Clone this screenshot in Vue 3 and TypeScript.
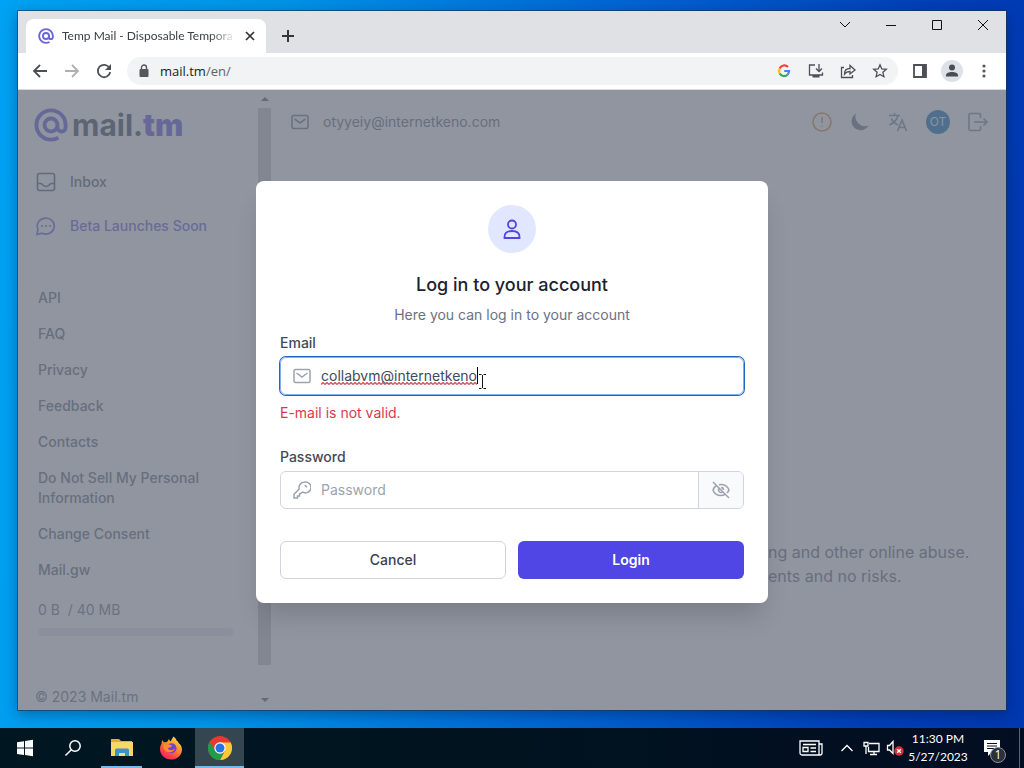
<script setup lang="ts">
import { ref } from 'vue'

const email = ref('collabvm@internetkeno')
const password = ref('')
const showPassword = ref(false)
const links: string[] = [
  'API',
  'FAQ',
  'Privacy',
  'Feedback',
  'Contacts',
  'Do Not Sell My Personal Information',
  'Change Consent',
  'Mail.gw',
]
</script>

<template>
  <div class="desktop">
    <div class="window">
      <div class="tabstrip">
        <div class="tab">
          <svg class="favicon" viewBox="1.5 1.5 21 21" aria-hidden="true">
            <path d="M16 12a4 4 0 1 0-8 0 4 4 0 0 0 8 0zm0 0v1.500a2.500 2.500 0 0 0 5 0V12a9 9 0 1 0-9 9c2 0 3.500-.5 4.500-1.200" />
          </svg>
          <span class="tab-title">Temp Mail - Disposable Tempora</span>
          <button class="tab-close" aria-label="Close tab">
            <svg width="10" height="10" viewBox="0 0 10 10"><path d="M1 1l8 8M9 1L1 9" stroke="#333" stroke-width="1.700" /></svg>
          </button>
        </div>
        <button class="new-tab" aria-label="New tab">
          <svg width="14" height="14" viewBox="0 0 14 14"><path d="M7 1v12M1 7h12" stroke="#333639" stroke-width="2" /></svg>
        </button>
        <div class="controls">
          <button aria-label="Search tabs"><svg width="12" height="12" viewBox="0 0 12 12"><path d="M1 3l5 5 5-5" /></svg></button>
          <button aria-label="Minimize"><svg width="12" height="12" viewBox="0 0 12 12"><path d="M1 6.500h10" /></svg></button>
          <button aria-label="Maximize"><svg width="12" height="12" viewBox="0 0 12 12"><path d="M1.500 1.500h9v9h-9z" /></svg></button>
          <button aria-label="Close"><svg width="12" height="12" viewBox="0 0 12 12"><path d="M1 1l10 10M11 1L1 11" /></svg></button>
        </div>
      </div>

      <div class="toolbar">
        <button class="tool" aria-label="Back"><svg viewBox="0 0 16 16"><path d="M15 8H2M8 2L2 8l6 6" /></svg></button>
        <button class="tool faded" aria-label="Forward"><svg viewBox="0 0 16 16"><path d="M1 8h13M8 2l6 6-6 6" /></svg></button>
        <button class="tool" aria-label="Reload">
          <svg viewBox="0 0 16 16"><path d="M13.500 5A6.200 6.200 0 1 0 14.200 9" /><path d="M15 1v6H9z" class="solid" /></svg>
        </button>
        <div class="omnibox">
          <svg class="lock" width="10" height="14" viewBox="0 0 10 14" aria-hidden="true">
            <rect x="0.500" y="5" width="9" height="8" rx="1" fill="#55585c" />
            <path d="M2.500 5V3.500a2.500 2.500 0 0 1 5 0V5" fill="none" stroke="#55585c" stroke-width="1.400" />
          </svg>
          <span class="url">mail.tm<span>/en/</span></span>
          <button class="tool" aria-label="Google Lens">
            <svg class="google" viewBox="0 0 16 16">
              <path d="M12 4A5 5 0 0 0 3.700 5.500" stroke="#ea4335" />
              <path d="M3.700 5.500a5 5 0 0 0 0 5" stroke="#fbbc05" />
              <path d="M3.700 10.500A5 5 0 0 0 11.500 11.700" stroke="#34a853" />
              <path d="M11.500 11.700A5 5 0 0 0 13 8H8.200" stroke="#4285f4" />
            </svg>
          </button>
          <button class="tool" aria-label="Install">
            <svg class="thin" viewBox="0 0 16 16"><path d="M7 2H1.500v10H14.500V9.500M11 1v7M8 5.500l3 3 3-3" /><path d="M4.500 12h7v2.500h-7z" class="solid" /></svg>
          </button>
          <button class="tool" aria-label="Share">
            <svg class="thin" viewBox="0 0 16 16"><path d="M4 4.500H1.500v10h11V12M4.500 11c0-4 2-5.500 5.500-5.500V2.500L15 7l-5 4V8.500C7.500 8.500 6 9 4.500 11z" /></svg>
          </button>
          <button class="tool" aria-label="Bookmark">
            <svg class="thin" viewBox="0 0 16 16"><path d="M8 1.800l1.800 4.100 4.500.4-3.400 3 1 4.400L8 11.400l-3.900 2.300 1-4.400-3.400-3 4.500-.4z" /></svg>
          </button>
        </div>
        <button class="tool" aria-label="Side panel">
          <svg viewBox="0 0 16 16"><path d="M2 2h12v12H2z" /><path d="M10 2h4v12h-4z" class="solid" /></svg>
        </button>
        <button class="tool" aria-label="Profile">
          <svg class="profile" viewBox="0 0 22 22"><circle cx="11" cy="11" r="11" fill="#dfe1e8" /><circle cx="11" cy="7.500" r="3" fill="#494c53" /><path d="M5 16.500v-1.300c0-4.200 12-4.200 12 0v1.300z" fill="#494c53" /></svg>
        </button>
        <button class="tool" aria-label="Menu">
          <svg viewBox="0 0 16 16"><g fill="#55585c" stroke="none"><circle cx="8" cy="3" r="1.600" /><circle cx="8" cy="8" r="1.600" /><circle cx="8" cy="13" r="1.600" /></g></svg>
        </button>
      </div>

      <div class="page">
        <aside class="sidebar">
          <div class="side-body">
            <a class="logo" href="#">
              <svg viewBox="1.500 1.500 21 21" aria-hidden="true">
                <path d="M16 12a4 4 0 1 0-8 0 4 4 0 0 0 8 0zm0 0v1.500a2.500 2.500 0 0 0 5 0V12a9 9 0 1 0-9 9c2 0 3.500-.5 4.500-1.200" />
              </svg>
              <span>mail.<b>tm</b></span>
            </a>
            <nav class="main-nav">
              <a href="#">
                <svg viewBox="0 0 20 20"><rect x="1.500" y="1.500" width="17" height="17" rx="2" /><path d="M1.500 11.500H5c1 0 1.500 3 5 3s4-3 5-3h3.500" /></svg>
                Inbox
              </a>
              <a href="#" class="beta">
                <svg viewBox="0 0 20 20"><path d="M1 18.500l.9-5.500A8.500 8 0 1 1 6 17.200z" /><path d="M6 10h.1M10 10h.1M14 10h.1" class="dots" /></svg>
                Beta Launches Soon
              </a>
            </nav>
            <nav class="links">
              <a v-for="link in links" :key="link" href="#">{{ link }}</a>
            </nav>
            <div class="quota">
              <span>0 B&nbsp; / 40 MB</span>
              <div class="quota-bar"></div>
            </div>
            <footer>© 2023 Mail.tm</footer>
          </div>
          <div class="scrollbar">
            <svg width="8" height="4" viewBox="0 0 8 4"><path d="M0 4l4-4 4 4z" /></svg>
            <div class="thumb"></div>
            <svg width="8" height="4" viewBox="0 0 8 4"><path d="M0 0l4 4 4-4z" /></svg>
          </div>
        </aside>

        <main>
          <header>
            <svg class="mail" viewBox="0 0 18 18" aria-hidden="true"><rect x="1" y="2.500" width="16" height="13" rx="1.500" /><path d="M3.500 6L9 10l5.500-4" /></svg>
            <span class="address">otyyeiy@internetkeno.com</span>
            <button aria-label="Status" class="warn"><svg viewBox="0 0 20 20"><circle cx="10" cy="10" r="9" /><path d="M10 5v6M10 13.500v1" /></svg></button>
            <button aria-label="Dark mode" class="moon"><svg viewBox="0 0 20 20"><path d="M6 1.500a9 9 0 1 0 12.500 12A9.500 9.500 0 0 1 6 1.500z" /></svg></button>
            <button aria-label="Language"><svg viewBox="0 0 20 20"><path d="M1 3.500h11M6.500 1v2.500M10 3.500C9 8 5.500 11 1.500 13M3.500 6.500c1 3 3.500 5 6.500 6.500M9.500 19l4.500-11 4.500 11M11 15.500h6" /></svg></button>
            <button aria-label="Account"><span class="avatar">OT</span></button>
            <button aria-label="Log out"><svg viewBox="0 0 20 20"><path d="M12.500 6V3a1.500 1.500 0 0 0-1.500-1.500H2.500A1.500 1.500 0 0 0 1 3v14a1.500 1.500 0 0 0 1.500 1.500H11a1.500 1.500 0 0 0 1.500-1.500v-3M6 10h13M15.500 6.500L19 10l-3.500 3.500" /></svg></button>
          </header>
          <p class="pitch">ng and other online abuse.<br />ents and no risks.</p>
        </main>

        <div class="backdrop">
          <form class="modal" role="dialog" aria-labelledby="login-title" @submit.prevent>
            <div class="badge">
              <svg width="24" height="24" viewBox="0 0 24 24"><circle cx="12" cy="7.500" r="4" /><path d="M4.500 21v-1c0-4 3-6 7.500-6s7.500 2 7.500 6v1z" /></svg>
            </div>
            <h1 id="login-title">Log in to your account</h1>
            <p class="sub">Here you can log in to your account</p>

            <label for="email">Email</label>
            <div class="field focused">
              <svg viewBox="0 0 18 18" aria-hidden="true"><rect x="1" y="2.500" width="16" height="13" rx="1.500" /><path d="M3.500 6L9 10l5.500-4" /></svg>
              <input id="email" v-model="email" type="text" />
              <svg class="squiggle" aria-hidden="true">
                <defs>
                  <pattern id="wave" width="4" height="3" patternUnits="userSpaceOnUse"><path d="M0 2.500L2 .5l2 2" fill="none" stroke="#d65a60" /></pattern>
                </defs>
                <rect width="100%" height="3" fill="url(#wave)" stroke="none" />
              </svg>
              <i class="caret"></i>
              <svg class="ibeam" viewBox="0 0 9 17" aria-hidden="true"><path d="M1 1.500h2.500M5.500 1.500H8M4.500 2v13M1 15.500h2.500M5.500 15.500H8" /></svg>
            </div>
            <p class="error">E-mail is not valid.</p>

            <label for="password">Password</label>
            <div class="field">
              <svg viewBox="0 0 18 18" aria-hidden="true"><path d="M11.500 1A5.500 5.500 0 0 0 6.200 8L1 13.200V17h3.500v-2h2v-2l3.300-1.800A5.500 5.500 0 1 0 11.500 1z" /><path d="M11.500 4.500a2 2 0 0 1 2 2" /></svg>
              <input id="password" v-model="password" :type="showPassword ? 'text' : 'password'" placeholder="Password" />
              <button type="button" class="eye" aria-label="Show password" @click="showPassword = !showPassword">
                <svg viewBox="0 0 18 18"><path d="M1 1l16 16M4.500 4.500C2.500 5.700 1.500 7.500 1 9c1 3 4 5.500 8 5.500 1.500 0 2.700-.3 3.800-.9M7 3.700C12 2.800 16 5.500 17 9c-.4 1.200-1 2.200-2 3M7.300 7.300a2.400 2.400 0 0 0 3.400 3.400M9 6.500a2.500 2.500 0 0 1 2.500 2.500" /></svg>
              </button>
            </div>

            <div class="actions">
              <button type="button" class="cancel">Cancel</button>
              <button type="submit" class="login">Login</button>
            </div>
          </form>
        </div>
      </div>
    </div>

    <div class="taskbar">
      <button class="task" aria-label="Start">
        <svg width="18" height="18" viewBox="0 0 18 18" fill="#fff"><path d="M1 3.200L8 2.200v6.400H1zM9 2l8-1.200v7.800H9zM1 9.500h7v6.400l-7-1zM9 9.500h8v7.700L9 16z" /></svg>
      </button>
      <button class="task search" aria-label="Search">
        <svg width="18" height="18" viewBox="0 0 18 18" fill="none" stroke="#fff" stroke-width="1.500"><circle cx="11" cy="7" r="5.200" /><path d="M7.300 10.700L1.500 16.500" /></svg>
      </button>
      <button class="task open" aria-label="File Explorer">
        <svg width="24" height="22" viewBox="0 0 24 22">
          <path d="M1 2h8l2 2h11v14H1z" fill="#e9a83a" /><path d="M1 5h22v14H1z" fill="#fbd768" />
          <path d="M5 19v-6q0-1.500 1.500-1.500h11q1.500 0 1.500 1.500v6h-4v-3H9v3z" fill="#3e92cc" /><path d="M9 16h6v3H9z" fill="#f6dc85" />
        </svg>
      </button>
      <button class="task" aria-label="Firefox">
        <svg width="24" height="24" viewBox="0 0 24 24">
          <defs>
            <linearGradient id="fox" x1="0.800" y1="0" x2="0.200" y2="1"><stop offset="0" stop-color="#ffe14a" /><stop offset="0.400" stop-color="#ff9428" /><stop offset="0.750" stop-color="#ff4048" /><stop offset="1" stop-color="#e41f74" /></linearGradient>
          </defs>
          <path d="M14.500.5c2 1.500 3 3 3.300 4.600 1-.1 1.600.8 1.700 1.800 1.800 1 3.500 3.600 3.500 6.500C23 19 18 23.500 12 23.500S1 19 1 13.200C1 10.500 2 8.500 2.600 7.500L3 4l2 2.300 3-.3 2-3 1 2.300c1.500 0 2-3 3.500-4.800z" fill="url(#fox)" />
          <circle cx="12.500" cy="12.300" r="5" fill="#7542c9" />
          <path d="M4.500 8.500c2-1.700 4-1.200 5.500 0l3 .7-1.200 2-3 .8c.5 2.500 4.500 3 7 .8-1 4.500-9 5-11-.3z" fill="#ff8b28" />
        </svg>
      </button>
      <button class="task open active" aria-label="Google Chrome">
        <svg width="24" height="24" viewBox="0 0 24 24">
          <circle cx="12" cy="12" r="12" fill="#e33b2e" />
          <path d="M12 6.500h10.700A12 12 0 0 1 12 24l4.800-9.200z" fill="#fcc934" />
          <path d="M1.600 6l5.600 8.800a5.500 5.500 0 0 0 9.600 0L12 24A12 12 0 0 1 1.600 6z" fill="#1e9e4a" />
          <circle cx="12" cy="12" r="5.700" fill="#fff" /><circle cx="12" cy="12" r="4.500" fill="#2474e5" />
        </svg>
      </button>

      <button class="tray news" aria-label="News">
        <svg width="24" height="16" viewBox="0 0 24 16"><path d="M1 1h19v14H3a2 2 0 0 1-2-2zM20 4h3v9a2 2 0 0 1-2 2h-2M4 4.500h13M4 7.500h5v4H4zM11.500 8H17M11.500 11.500H17" /></svg>
      </button>
      <button class="tray" aria-label="Hidden icons"><svg width="14" height="8" viewBox="0 0 14 8"><path d="M1.500 7L7 1.500 12.500 7" /></svg></button>
      <button class="tray" aria-label="Network"><svg width="17" height="15" viewBox="0 0 17 15"><path d="M6 2.500h10v8H5.500V6M11 10.500v3M7 13.500h7M1 1.500h4v3.500H1zM3 5v8" /></svg></button>
      <button class="tray" aria-label="Volume muted">
        <svg width="18" height="16" viewBox="0 0 18 16"><path d="M1.500 5.500h2L7 1.500v12L3.500 10h-2z" /><circle cx="13" cy="11" r="4.700" fill="#d6313a" stroke="none" /><path d="M11.200 9.200l3.600 3.600M14.800 9.200l-3.600 3.600" /></svg>
      </button>
      <div class="clock"><span>11:30 PM</span><span>5/27/2023</span></div>
      <button class="notify" aria-label="Notifications">
        <svg width="18" height="18" viewBox="0 0 18 18"><path d="M1 1h16v12H9l-4 4v-4H1z" fill="#fff" /><path d="M4 4.500h10M4 7h10M4 9.500h7" stroke="#06142b" /></svg>
        <span class="count">1</span>
      </button>
      <button class="peek" aria-label="Show desktop"></button>
    </div>
  </div>
</template>

<style>
body {
  margin: 0;
}
</style>

<style scoped>
* {
  box-sizing: border-box;
}
button {
  padding: 0;
  border: 0;
  background: none;
  font: inherit;
  color: inherit;
}
a {
  color: inherit;
  text-decoration: none;
}
svg {
  display: block;
  flex: none;
}
.desktop {
  display: flex;
  flex-direction: column;
  height: 100vh;
  overflow: hidden;
  background: linear-gradient(95deg, #00a2f3 0%, #0095e8 25%, #0068d5 55%, #003fb8 85%, #0038b0 100%);
  font-family: "Open Sans", "Liberation Sans", sans-serif;
}
.window {
  flex: 1;
  min-height: 0;
  margin: 11px 18px 18px;
  display: flex;
  flex-direction: column;
  background: #fff;
  box-shadow: 0 0 0 1px rgba(20, 50, 90, 0.6), 0 4px 14px rgba(0, 20, 60, 0.4);
}
.tabstrip {
  display: flex;
  height: 42px;
  padding-left: 8px;
  background: #dfe1e5;
}
.tab {
  display: flex;
  align-items: center;
  width: 240px;
  margin-top: 8px;
  padding: 0 11px 0 12px;
  border-radius: 8px 8px 0 0;
  background: #fff;
}
.favicon {
  width: 16px;
  height: 16px;
  margin-right: 8px;
  fill: none;
  stroke: #6a66d8;
  stroke-width: 2.5;
}
.tab-title {
  flex: 1;
  overflow: hidden;
  white-space: nowrap;
  font-family: Lato, "Open Sans", sans-serif;
  font-size: 12px;
  line-height: 16px;
  color: #3c4043;
  -webkit-mask-image: linear-gradient(90deg, #000 85%, transparent);
  mask-image: linear-gradient(90deg, #000 85%, transparent);
}
.tab-close {
  margin-left: 9px;
}
.new-tab {
  display: grid;
  place-items: center;
  width: 28px;
  height: 28px;
  margin: 11px 0 0 8px;
}
.controls {
  display: flex;
  margin-left: auto;
}
.controls button {
  display: grid;
  place-items: center;
  width: 46px;
  height: 28px;
}
.controls svg {
  fill: none;
  stroke: #111;
}
.toolbar {
  display: flex;
  align-items: center;
  height: 37px;
  padding: 0 6px;
  border-bottom: 1px solid #d9dbdf;
}
.tool {
  display: grid;
  place-items: center;
  width: 32px;
  height: 28px;
}
.tool svg {
  width: 16px;
  height: 16px;
  fill: none;
  stroke: #4c4f53;
  stroke-width: 1.8;
}
.tool svg.thin {
  stroke-width: 1.3;
}
.tool svg.google {
  stroke-width: 2.2;
  stroke: none;
}
.tool svg.profile {
  width: 22px;
  height: 22px;
  stroke: none;
}
.tool .solid {
  fill: #4c4f53;
  stroke: none;
}
.faded {
  opacity: 0.45;
}
.omnibox {
  display: flex;
  align-items: center;
  flex: 1;
  height: 28px;
  margin: 0 6px 0 7px;
  padding: 0 2px 0 12px;
  border-radius: 14px;
  background: #f1f3f4;
}
.lock {
  margin-right: 11px;
}
.url {
  flex: 1;
  font-size: 13px;
  color: #202124;
}
.url span {
  color: #5f6368;
}
.page {
  position: relative;
  flex: 1;
  min-height: 0;
  display: flex;
  overflow: hidden;
  background: #fff;
  font-family: Inter, "Liberation Sans", sans-serif;
  font-size: 14px;
  line-height: 20px;
}
.sidebar {
  display: flex;
  width: 256px;
}
.side-body {
  flex: 1;
  padding: 18px 16px 0;
  overflow: hidden;
  color: #4b5563;
}
.logo {
  display: flex;
  align-items: center;
  gap: 4px;
  height: 34px;
  font-size: 30px;
  font-weight: 700;
  color: #374151;
}
.logo svg {
  width: 34px;
  height: 34px;
  fill: none;
  stroke: #5a52e0;
  stroke-width: 2.4;
}
.logo b {
  color: #5a52e0;
}
.main-nav {
  display: flex;
  flex-direction: column;
  gap: 4px;
  margin-top: 20px;
}
.main-nav a {
  display: flex;
  align-items: center;
  gap: 14px;
  height: 40px;
  padding-left: 2px;
  font-weight: 500;
}
.main-nav svg {
  width: 20px;
  height: 20px;
  fill: none;
  stroke: currentColor;
  stroke-width: 1.6;
}
.main-nav .dots {
  stroke-width: 2;
  stroke-linecap: round;
}
.main-nav .beta {
  color: #5f57dc;
}
.links {
  display: flex;
  flex-direction: column;
  gap: 16px;
  margin-top: 42px;
  padding: 0 4px;
  font-weight: 500;
  color: #5d6573;
}
.quota {
  margin-top: 20px;
  padding: 0 6px 0 4px;
  color: #6b7280;
}
.quota-bar {
  height: 8px;
  margin-top: 8px;
  border-radius: 4px;
  background: #e5e7eb;
}
footer {
  margin-top: 51px;
  padding-left: 1px;
  color: #6b7280;
}
.scrollbar {
  display: flex;
  flex-direction: column;
  align-items: center;
  width: 19px;
  padding: 7px 0 8px;
}
.scrollbar svg {
  fill: #505050;
}
.thumb {
  width: 13px;
  height: 557px;
  margin: 7px 0 auto;
  background: #c1c1c1;
}
main {
  flex: 1;
  min-width: 0;
}
header {
  display: flex;
  align-items: center;
  height: 64px;
  padding: 0 8px 0 17px;
  color: #5d6573;
}
header svg {
  width: 20px;
  height: 20px;
  fill: none;
  stroke: #7b8290;
  stroke-width: 1.6;
}
header .mail {
  width: 18px;
  height: 18px;
  stroke: #6b7280;
}
.address {
  flex: 1;
  margin-left: 14px;
}
header button {
  display: grid;
  place-items: center;
  width: 40px;
  height: 40px;
}
header .warn svg {
  stroke: #d98a26;
}
header .moon {
  width: 36px;
}
header .moon svg {
  fill: #6b7280;
  stroke: none;
}
.avatar {
  display: grid;
  place-items: center;
  width: 24px;
  height: 24px;
  border-radius: 50%;
  background: #0369b1;
  color: #e0f2fe;
  font-size: 12px;
}
.pitch {
  margin: 386px 0 0 calc(50% + 128px);
  white-space: nowrap;
  font-size: 16px;
  line-height: 24px;
  color: #5d6573;
}
.backdrop {
  position: absolute;
  inset: 0;
  display: flex;
  align-items: center;
  justify-content: center;
  padding-bottom: 16px;
  background: rgba(107, 114, 128, 0.75);
}
.modal {
  width: 512px;
  padding: 24px;
  border-radius: 8px;
  background: #fff;
  box-shadow: 0 18px 26px -6px rgba(0, 0, 0, 0.16);
}
.badge {
  display: grid;
  place-items: center;
  width: 48px;
  height: 48px;
  margin: 0 auto;
  border-radius: 50%;
  background: #e0e7ff;
}
.badge svg {
  fill: none;
  stroke: #4f46e5;
  stroke-width: 1.8;
}
h1 {
  margin: 20px 0 8px;
  text-align: center;
  font-size: 18px;
  line-height: 24px;
  font-weight: 500;
  color: #1b2230;
}
.sub {
  margin: 0 0 8px;
  text-align: center;
  color: #6b7280;
}
label {
  display: block;
  margin-bottom: 4px;
  font-weight: 500;
  color: #414a58;
}
.field {
  position: relative;
  display: flex;
  align-items: center;
  height: 38px;
  padding-left: 12px;
  border: 1px solid #d1d5db;
  border-radius: 6px;
  overflow: hidden;
}
.field svg {
  width: 18px;
  height: 18px;
  fill: none;
  stroke: #9ca3af;
  stroke-width: 1.5;
}
.field.focused {
  border-color: #7fb0ee;
  box-shadow: 0 0 0 1px #2563c4;
  overflow: visible;
}
input {
  flex: 1;
  min-width: 0;
  height: 100%;
  margin-left: 10px;
  padding: 0 0 2px;
  border: 0;
  outline: 0;
  background: none;
  font: inherit;
  color: #414a58;
}
input::placeholder {
  color: #9ca3af;
}
.field .squiggle {
  position: absolute;
  left: 40px;
  top: 24px;
  width: 156px;
  height: 3px;
}
.caret {
  position: absolute;
  left: 196px;
  top: 9px;
  width: 1px;
  height: 17px;
  background: #000;
}
.field .ibeam {
  position: absolute;
  left: 197px;
  top: 15px;
  width: 9px;
  height: 17px;
  stroke: #111;
  stroke-width: 1;
}
.error {
  margin: 8px 0 24px;
  color: #d8394f;
}
.eye {
  display: grid;
  place-items: center;
  width: 45px;
  height: 100%;
  border-left: 1px solid #d1d5db;
  background: #f9fafb;
}
.actions {
  display: grid;
  grid-template-columns: 1fr 1fr;
  gap: 12px;
  margin-top: 32px;
}
.actions button {
  height: 38px;
  border-radius: 6px;
  font-weight: 500;
}
.cancel {
  border: 1px solid #d1d5db;
  background: #fff;
  color: #374151;
}
.actions .login {
  background: #4f46e5;
  color: #fff;
  font-weight: 600;
}
.taskbar {
  display: flex;
  height: 40px;
  background: linear-gradient(90deg, #001722 0%, #00131f 50%, #030d22 100%);
  color: #fff;
}
.task {
  position: relative;
  display: grid;
  place-items: center;
  width: 49px;
  height: 40px;
}
.task.search {
  width: 48px;
}
.open::after {
  content: "";
  position: absolute;
  left: 4px;
  right: 4px;
  bottom: 0;
  height: 2px;
  background: #76b9ed;
}
.active {
  background: #34464f;
}
.active::after {
  left: 0;
  right: 0;
}
.tray {
  display: grid;
  place-items: center;
  width: 24px;
}
.tray svg {
  fill: none;
  stroke: #fff;
  stroke-width: 1.3;
}
.news {
  width: 48px;
  margin-left: auto;
}
.clock {
  display: flex;
  flex-direction: column;
  justify-content: center;
  align-items: center;
  width: 64px;
  padding-right: 2px;
  font-family: Lato, "Open Sans", sans-serif;
  font-size: 12px;
  line-height: 18px;
  white-space: nowrap;
}
.notify {
  position: relative;
  display: grid;
  place-items: center;
  width: 48px;
  padding-right: 6px;
}
.count {
  position: absolute;
  left: 19px;
  top: 19px;
  width: 16px;
  height: 16px;
  border: 1px solid #8b909a;
  border-radius: 50%;
  background: #2a303c;
  font-size: 12px;
  line-height: 14px;
  text-align: center;
}
.peek {
  width: 5px;
  border-left: 1px solid #56637a;
}
</style>
